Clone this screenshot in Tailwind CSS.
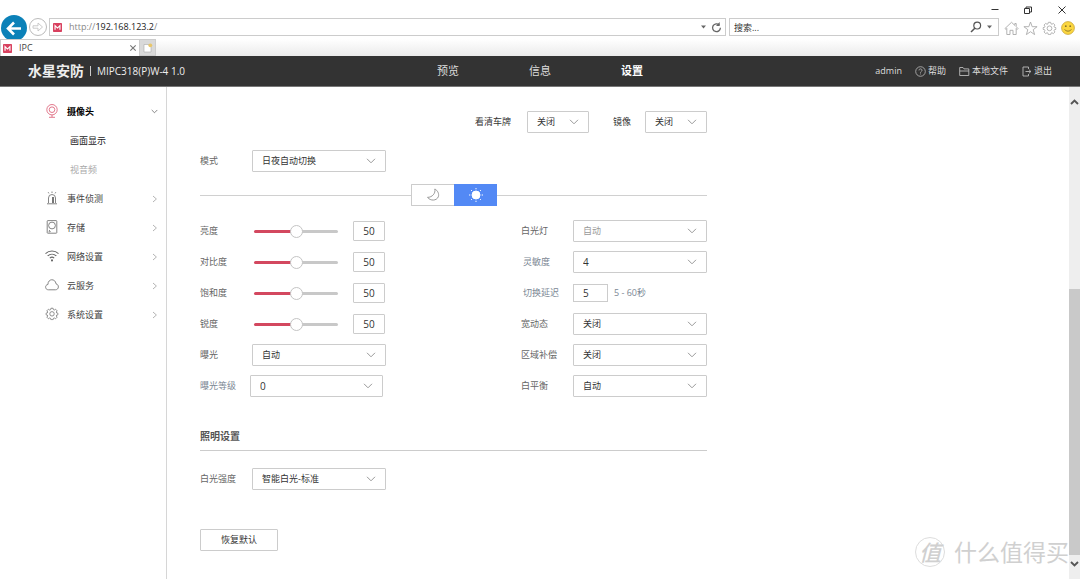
<!DOCTYPE html>
<html lang="zh-CN">
<head>
<meta charset="utf-8">
<title>IPC</title>
<script src="https://cdn.jsdelivr.net/npm/@tailwindcss/browser@4"></script>
</head>
<body class="relative flex min-h-screen flex-col overflow-x-hidden bg-white font-['Open_Sans','Noto_Sans_CJK_SC',sans-serif] text-[9px] leading-3 text-[#444]">

<svg class="hidden">
  <symbol id="down" viewBox="0 0 10 6"><path d="M1 .8l4 4 4-4" fill="none" stroke="currentColor" stroke-width="1"/></symbol>
  <symbol id="right" viewBox="0 0 6 8"><path d="M1 1l3.400 3L1 7" fill="none" stroke="currentColor" stroke-width=".9"/></symbol>
  <symbol id="fav" viewBox="0 0 10 10"><rect width="10" height="10" rx=".8" fill="#d8415f"/><path d="M2.300 7.400V2.900L5 5.600l2.700-2.700v4.500" fill="none" stroke="#fff" stroke-width="1.300"/></symbol>
  <symbol id="gear" viewBox="0 0 16 16"><g fill="none" stroke="currentColor"><path d="M6.700 1.500h2.600l.4 1.700 1.100.5 1.500-1 1.900 1.900-1 1.500.5 1.100 1.700.4v1.800l-1.700.4-.5 1.100 1 1.500-1.900 1.900-1.500-1-1.100.5-.4 1.700H6.700l-.4-1.700-1.100-.5-1.500 1-1.900-1.900 1-1.500-.5-1.100L.6 9.400V7.600l1.700-.4.5-1.100-1-1.500 1.900-1.900 1.500 1 1.100-.5z"/><circle cx="8" cy="8.300" r="2.700"/></g></symbol>
</svg>

<!-- Window controls -->
<div class="flex h-[15px] items-end justify-end gap-[23px] pr-3">
  <button aria-label="最小化" class="flex w-[10px] justify-center"><svg class="h-[10px] w-[10px]" viewBox="0 0 10 10"><path d="M1.500 4.500h7" stroke="#333"/></svg></button>
  <button aria-label="还原" class="flex w-[10px] justify-center"><svg class="h-[10px] w-[10px]" viewBox="0 0 10 10"><path d="M1.500 3.500h5v5h-5zM3 3.500v-1.500h5.500v5H6.500" fill="none" stroke="#333"/></svg></button>
  <button aria-label="关闭窗口" class="flex w-[12px] justify-center"><svg class="h-[10px] w-[10px]" viewBox="0 0 10 10"><path d="M1.500 1.500l7 7m0-7l-7 7" stroke="#333"/></svg></button>
</div>

<!-- Address bar -->
<div class="flex h-6 items-center pr-[5px]">
  <button aria-label="后退" class="ml-px"><svg class="h-6 w-[26px]" viewBox="0 0 26 24"><circle cx="13" cy="13" r="13" fill="#0b81b8"/><path d="M20 13.500H7.500M13 7.500l-6 6 6 6" fill="none" stroke="#fff" stroke-width="2.600"/></svg></button>
  <button aria-label="前进" class="ml-px"><svg class="h-[20px] w-[20px]" viewBox="0 0 20 20"><circle cx="10" cy="10" r="8.500" fill="#fff" stroke="#bbb"/><path d="M5 8.800h5V6l4.500 4-4.500 4v-2.800H5z" fill="none" stroke="#c4c4c4" stroke-width=".9"/></svg></button>
  <div class="ml-px flex h-[18px] min-w-0 flex-1 items-center border border-[#ccc] bg-white pl-[3px] pr-[3px]">
    <svg class="h-[9px] w-[9px]"><use href="#fav"/></svg>
    <span class="ml-[7px] flex-1 whitespace-nowrap leading-4 text-[#888]">http://<span class="text-[#222]">192.168.123.2</span>/</span>
    <svg class="h-1 w-[5px]" viewBox="0 0 5 4"><path d="M0 .5h5L2.500 3.500z" fill="#666"/></svg>
    <button aria-label="刷新" class="ml-[5px]"><svg class="h-[11px] w-[11px]" viewBox="0 0 11 11"><path d="M8.300 3A3.900 3.900 0 1 0 9.400 5.800" fill="none" stroke="#666" stroke-width="1.300"/><path d="M8.700 0v4H5z" fill="#666"/></svg></button>
  </div>
  <div class="ml-[3px] flex h-[18px] w-[270px] items-center border border-[#ccc] bg-white pl-1 pr-[6px]">
    <input type="text" aria-label="搜索" placeholder="搜索..." class="h-4 min-w-0 flex-1 bg-transparent outline-none placeholder:text-[#333]">
    <svg class="h-3 w-3" viewBox="0 0 12 12"><circle cx="7.200" cy="4.600" r="3.400" fill="none" stroke="#555" stroke-width="1.200"/><path d="M4.800 7.200L1 11" stroke="#555" stroke-width="1.500"/></svg>
    <svg class="ml-[5px] h-1 w-[5px]" viewBox="0 0 5 4"><path d="M0 .5h5L2.500 3.500z" fill="#666"/></svg>
  </div>
  <div class="ml-[5px] flex items-center gap-[4px] pt-[2px] text-[#aaa]">
    <button aria-label="主页"><svg class="h-[15px] w-[15px]" viewBox="0 0 15 15"><path d="M1 7.500L7.500 1.300 10.800 4.400V2.500h1.400v3.200L14 7.500l-.8.900-1-1v6.100H9V9.300H6v4.200H2.800V7.400l-1 1z" fill="none" stroke="currentColor" stroke-width=".9"/></svg></button>
    <button aria-label="收藏夹"><svg class="h-[15px] w-[15px]" viewBox="0 0 15 15"><path d="M7.500 1l1.700 4.700h4.900l-3.900 3 1.400 4.900-4.100-2.900-4.100 2.900 1.400-4.900-3.900-3h4.900z" fill="none" stroke="currentColor" stroke-width=".9"/></svg></button>
    <button aria-label="工具"><svg class="h-[15px] w-[15px]" viewBox="0 0 16 17"><use href="#gear" width="16" height="16"/></svg></button>
    <button aria-label="反馈"><svg class="h-[14px] w-[14px]" viewBox="0 0 14 14"><circle cx="7" cy="7" r="6.400" fill="#fbd63f" stroke="#c9a63a" stroke-width=".8"/><circle cx="4.800" cy="5.200" r=".9" fill="#86702a"/><circle cx="9.200" cy="5.200" r=".9" fill="#86702a"/><path d="M3.600 8.400c1.500 2.300 5.300 2.300 6.800 0" fill="none" stroke="#86702a" stroke-width=".9"/></svg></button>
  </div>
</div>

<!-- Browser tabs -->
<div class="flex h-[17px] bg-linear-to-b from-white to-[#ebebeb]">
  <div class="flex w-[140px] items-center border border-b-0 border-[#ccc] bg-white pl-[2px] pr-[2px]">
    <svg class="h-[9px] w-[9px]"><use href="#fav"/></svg>
    <span class="ml-[7px] flex-1">IPC</span>
    <button aria-label="关闭标签页"><svg class="h-2 w-2" viewBox="0 0 8 8"><path d="M1.300 1.300l5.400 5.400m0-5.400L1.300 6.700" stroke="#777" stroke-width="1.100"/></svg></button>
  </div>
  <button aria-label="新建标签页" class="flex w-4 items-center justify-center border border-l-0 border-[#ccc] bg-[#d9d9d9]"><svg class="h-[10px] w-[10px]" viewBox="0 0 10 10"><path d="M1 1.500h5l2 2v5.500H1z" fill="#fff" stroke="#aaa" stroke-width=".6"/><circle cx="7.300" cy="2.300" r="1.900" fill="#e8c66a"/></svg></button>
</div>

<!-- Site header -->
<header class="grid h-[31px] grid-cols-[1fr_auto_1fr] items-center border-b border-[#777] bg-[#333] px-7 text-[#ddd]">
  <div class="flex items-center whitespace-nowrap">
    <span class="text-[14px] font-bold leading-4 text-[#eee]">水星安防</span>
    <span class="ml-[6px] h-[10px] w-px bg-[#ccc]"></span>
    <span class="ml-[6px] text-[10px] text-[#eee]">MIPC318(P)W-4 1.0</span>
  </div>
  <nav class="flex gap-[70px] text-[11px] leading-4">
    <a href="#">预览</a><a href="#">信息</a><a href="#" class="font-bold text-white" aria-current="page">设置</a>
  </nav>
  <div class="flex items-center justify-end whitespace-nowrap">
    <span>admin</span>
    <a href="#" class="ml-[13px] flex items-center gap-[2px]"><svg class="h-[11px] w-[11px]" viewBox="0 0 11 11" fill="none" stroke="#bbb" stroke-width=".8"><circle cx="5.500" cy="5.500" r="4.800"/><path d="M4 4.400c0-2 3-2 3 0 0 1-1.500 1.100-1.500 2.300m0 .8v.9"/></svg>帮助</a>
    <a href="#" class="ml-[13px] flex items-center gap-[2px]"><svg class="h-[11px] w-[11px]" viewBox="0 0 11 11" fill="none" stroke="#bbb" stroke-width=".9"><path d="M.7 9.500V1.500h3.300l1 1.400h4.800v6.600zM.7 5h9.100"/></svg>本地文件</a>
    <a href="#" class="ml-[13px] flex items-center gap-[2px]"><svg class="h-[11px] w-[11px]" viewBox="0 0 11 11" fill="none" stroke="#bbb" stroke-width=".9"><path d="M7.500 3V1H2v9h5.500V8M4.500 5.500h5.300M7.900 3.600l2 1.900-2 1.900"/></svg>退出</a>
  </div>
</header>

<div class="flex flex-1">
  <!-- Sidebar -->
  <aside class="w-[167px] shrink-0 border-r border-[#d6d6d6] pt-[10px]">
    <nav class="flex flex-col">
      <a href="#" class="flex h-[29px] items-center pl-[45px] pr-2 font-bold text-black">
        <svg class="mb-[2px] mr-2 h-[14px] w-[14px]" viewBox="0 0 14 14" fill="none" stroke="#df6a80" stroke-width=".9"><circle cx="7" cy="5.700" r="5.200"/><circle cx="7" cy="5.700" r="2.800"/><path d="M7 11v2M4 13.300h6"/></svg>
        <span class="flex-1">摄像头</span><svg class="h-[5px] w-[7px] text-[#555]"><use href="#down"/></svg>
      </a>
      <a href="#" class="flex h-[29px] items-center pl-[70px] text-[#222]">画面显示</a>
      <a href="#" class="flex h-[29px] items-center pl-[70px] text-[#aaa]">视音频</a>
      <a href="#" class="flex h-[29px] items-center pl-[45px] pr-2">
        <svg class="mb-[2px] mr-2 h-[14px] w-[14px]" viewBox="0 0 14 14" fill="none" stroke="#777" stroke-width=".9"><path d="M3.500 12V7a3.500 3.500 0 0 1 7 0v5M2 12.800h10M7 .5v1.500M3.200 1.200l.7 1.200M10.800 1.200l-.7 1.200"/><path d="M8 6v6" stroke="#555" stroke-width="1.600"/></svg>
        <span class="flex-1">事件侦测</span><svg class="h-2 w-[6px] text-[#aaa]"><use href="#right"/></svg>
      </a>
      <a href="#" class="flex h-[29px] items-center pl-[45px] pr-2">
        <svg class="mb-[2px] mr-2 h-[14px] w-[14px]" viewBox="0 0 14 14" fill="none" stroke="#777" stroke-width=".9"><rect x="2.200" y=".6" width="9.600" height="12.600" rx=".6"/><circle cx="7" cy="5.500" r="3.400"/><path d="M4 10l1.500 1.700M3.600 11.800h1.500"/></svg>
        <span class="flex-1">存储</span><svg class="h-2 w-[6px] text-[#aaa]"><use href="#right"/></svg>
      </a>
      <a href="#" class="flex h-[29px] items-center pl-[45px] pr-2">
        <svg class="mb-[2px] mr-2 h-[14px] w-[14px]" viewBox="0 0 14 14" fill="none" stroke="#666" stroke-width="1.100"><path d="M.5 4.600c3.700-3.500 9.300-3.500 13 0M2.700 6.900c2.500-2.300 6.100-2.300 8.600 0M4.800 9.100c1.300-1.100 3.100-1.100 4.400 0"/><circle cx="7" cy="11.400" r=".5"/></svg>
        <span class="flex-1">网络设置</span><svg class="h-2 w-[6px] text-[#aaa]"><use href="#right"/></svg>
      </a>
      <a href="#" class="flex h-[29px] items-center pl-[45px] pr-2">
        <svg class="mb-[2px] mr-2 h-[14px] w-[14px]" viewBox="0 0 14 14" fill="none" stroke="#777" stroke-width=".9"><path d="M3.500 11.800C-.3 11.800-.2 6.700 2.900 6.500 3 .3 10.400.3 11 5.800c3.400.8 3.100 6-.6 6z"/></svg>
        <span class="flex-1">云服务</span><svg class="h-2 w-[6px] text-[#aaa]"><use href="#right"/></svg>
      </a>
      <a href="#" class="flex h-[29px] items-center pl-[45px] pr-2">
        <svg class="mb-[2px] mr-2 h-[14px] w-[14px] text-[#777]" viewBox="0 0 16 17"><use href="#gear" width="16" height="16"/></svg>
        <span class="flex-1">系统设置</span><svg class="h-2 w-[6px] text-[#aaa]"><use href="#right"/></svg>
      </a>
    </nav>
  </aside>

  <!-- Settings form -->
  <main class="min-w-0 flex-1 px-[33px] pt-6">
    <form class="max-w-[507px] text-[#666]">
      <div class="flex items-center justify-end text-[#333]">
        <label for="plate" class="mr-4">看清车牌</label>
        <div class="relative w-[62px]"><select id="plate" class="h-[22px] w-full appearance-none rounded-[1px] border border-[#ccc] bg-white pl-[9px] text-[#333]"><option>关闭</option></select><svg class="pointer-events-none absolute right-[10px] top-2 h-[6px] w-[10px] text-[#999]"><use href="#down"/></svg></div>
        <label for="mirror" class="ml-6 mr-[14px]">镜像</label>
        <div class="relative w-[62px]"><select id="mirror" class="h-[22px] w-full appearance-none rounded-[1px] border border-[#ccc] bg-white pl-[9px] text-[#333]"><option>关闭</option></select><svg class="pointer-events-none absolute right-[10px] top-2 h-[6px] w-[10px] text-[#999]"><use href="#down"/></svg></div>
      </div>

      <div class="mt-[17px] flex items-center">
        <label for="mode" class="w-[52px]">模式</label>
        <div class="relative w-[134px]"><select id="mode" class="h-[22px] w-full appearance-none rounded-[1px] border border-[#ccc] bg-white pl-[9px] text-[#333]"><option>日夜自动切换</option></select><svg class="pointer-events-none absolute right-[10px] top-2 h-[6px] w-[10px] text-[#999]"><use href="#down"/></svg></div>
      </div>

      <div class="mt-3 flex items-center">
        <span class="h-px flex-1 bg-[#d0d0d0]"></span>
        <button type="button" aria-label="夜间" class="flex h-[22px] w-[43px] items-center justify-center rounded-l-[1px] border border-r-0 border-[#ccc] bg-white"><svg class="h-[14px] w-[14px]" viewBox="0 0 14 14"><path d="M8.800 1c1 4.300-2.500 8.300-7.300 8.400 3 3.700 9 3.600 10.800-.6C13.400 5.900 11.600 2.300 8.800 1z" fill="none" stroke="#999"/></svg></button>
        <button type="button" aria-label="白天" aria-pressed="true" class="flex h-[22px] w-[43px] items-center justify-center bg-[#5389f5]"><svg class="h-[14px] w-[14px]" viewBox="0 0 14 14" stroke="#fff"><circle cx="7" cy="7" r="4" fill="#fff"/><path d="M7 0v1.300M7 12.700V14M0 7h1.300M12.700 7H14M2.100 2.100l.9.900M11 11l.9.900M2.100 11.900L3 11M11 3l.9-.9"/></svg></button>
        <span class="h-px flex-[0_0_210px] bg-[#d0d0d0]"></span>
      </div>

      <div class="mt-[14px] flex justify-between">
        <div class="flex flex-col gap-[9px]">
          <div class="flex h-[22px] items-center"><label for="s1" class="w-[54px]">亮度</label><input id="s1" type="range" value="50" class="h-[13px] w-[84px] appearance-none bg-transparent [&::-webkit-slider-runnable-track]:h-[3px] [&::-webkit-slider-runnable-track]:rounded-full [&::-webkit-slider-runnable-track]:bg-linear-to-r [&::-webkit-slider-runnable-track]:from-[#d3485f] [&::-webkit-slider-runnable-track]:from-50% [&::-webkit-slider-runnable-track]:to-[#c8c8c8] [&::-webkit-slider-runnable-track]:to-50% [&::-webkit-slider-thumb]:-mt-[5px] [&::-webkit-slider-thumb]:h-[13px] [&::-webkit-slider-thumb]:w-[13px] [&::-webkit-slider-thumb]:appearance-none [&::-webkit-slider-thumb]:rounded-full [&::-webkit-slider-thumb]:border [&::-webkit-slider-thumb]:border-[#c4c4c4] [&::-webkit-slider-thumb]:bg-white"><input type="text" aria-label="亮度值" value="50" class="ml-[15px] h-5 w-8 rounded-[1px] border border-[#ccc] text-center text-[10px] text-[#333]"></div>
          <div class="flex h-[22px] items-center"><label for="s2" class="w-[54px]">对比度</label><input id="s2" type="range" value="50" class="h-[13px] w-[84px] appearance-none bg-transparent [&::-webkit-slider-runnable-track]:h-[3px] [&::-webkit-slider-runnable-track]:rounded-full [&::-webkit-slider-runnable-track]:bg-linear-to-r [&::-webkit-slider-runnable-track]:from-[#d3485f] [&::-webkit-slider-runnable-track]:from-50% [&::-webkit-slider-runnable-track]:to-[#c8c8c8] [&::-webkit-slider-runnable-track]:to-50% [&::-webkit-slider-thumb]:-mt-[5px] [&::-webkit-slider-thumb]:h-[13px] [&::-webkit-slider-thumb]:w-[13px] [&::-webkit-slider-thumb]:appearance-none [&::-webkit-slider-thumb]:rounded-full [&::-webkit-slider-thumb]:border [&::-webkit-slider-thumb]:border-[#c4c4c4] [&::-webkit-slider-thumb]:bg-white"><input type="text" aria-label="对比度值" value="50" class="ml-[15px] h-5 w-8 rounded-[1px] border border-[#ccc] text-center text-[10px] text-[#333]"></div>
          <div class="flex h-[22px] items-center"><label for="s3" class="w-[54px]">饱和度</label><input id="s3" type="range" value="50" class="h-[13px] w-[84px] appearance-none bg-transparent [&::-webkit-slider-runnable-track]:h-[3px] [&::-webkit-slider-runnable-track]:rounded-full [&::-webkit-slider-runnable-track]:bg-linear-to-r [&::-webkit-slider-runnable-track]:from-[#d3485f] [&::-webkit-slider-runnable-track]:from-50% [&::-webkit-slider-runnable-track]:to-[#c8c8c8] [&::-webkit-slider-runnable-track]:to-50% [&::-webkit-slider-thumb]:-mt-[5px] [&::-webkit-slider-thumb]:h-[13px] [&::-webkit-slider-thumb]:w-[13px] [&::-webkit-slider-thumb]:appearance-none [&::-webkit-slider-thumb]:rounded-full [&::-webkit-slider-thumb]:border [&::-webkit-slider-thumb]:border-[#c4c4c4] [&::-webkit-slider-thumb]:bg-white"><input type="text" aria-label="饱和度值" value="50" class="ml-[15px] h-5 w-8 rounded-[1px] border border-[#ccc] text-center text-[10px] text-[#333]"></div>
          <div class="flex h-[22px] items-center"><label for="s4" class="w-[54px]">锐度</label><input id="s4" type="range" value="50" class="h-[13px] w-[84px] appearance-none bg-transparent [&::-webkit-slider-runnable-track]:h-[3px] [&::-webkit-slider-runnable-track]:rounded-full [&::-webkit-slider-runnable-track]:bg-linear-to-r [&::-webkit-slider-runnable-track]:from-[#d3485f] [&::-webkit-slider-runnable-track]:from-50% [&::-webkit-slider-runnable-track]:to-[#c8c8c8] [&::-webkit-slider-runnable-track]:to-50% [&::-webkit-slider-thumb]:-mt-[5px] [&::-webkit-slider-thumb]:h-[13px] [&::-webkit-slider-thumb]:w-[13px] [&::-webkit-slider-thumb]:appearance-none [&::-webkit-slider-thumb]:rounded-full [&::-webkit-slider-thumb]:border [&::-webkit-slider-thumb]:border-[#c4c4c4] [&::-webkit-slider-thumb]:bg-white"><input type="text" aria-label="锐度值" value="50" class="ml-[15px] h-5 w-8 rounded-[1px] border border-[#ccc] text-center text-[10px] text-[#333]"></div>
          <div class="flex items-center"><label for="exp" class="w-[52px]">曝光</label><div class="relative w-[134px]"><select id="exp" class="h-[22px] w-full appearance-none rounded-[1px] border border-[#ccc] bg-white pl-[9px] text-[#333]"><option>自动</option></select><svg class="pointer-events-none absolute right-[10px] top-2 h-[6px] w-[10px] text-[#999]"><use href="#down"/></svg></div></div>
          <div class="flex items-center"><label for="lvl" class="w-[50px] text-[#7b8794]">曝光等级</label><div class="relative w-[133px]"><select id="lvl" class="h-[22px] w-full appearance-none rounded-[1px] border border-[#ccc] bg-white pl-[9px] text-[10px] text-[#333]"><option>0</option></select><svg class="pointer-events-none absolute right-[10px] top-2 h-[6px] w-[10px] text-[#999]"><use href="#down"/></svg></div></div>
        </div>
        <div class="flex flex-col gap-[9px]">
          <div class="flex items-center"><label for="lamp" class="w-[52px]">白光灯</label><div class="relative w-[134px]"><select id="lamp" disabled class="h-[22px] w-full appearance-none rounded-[1px] border border-[#ccc] bg-white pl-[9px] text-[#999] opacity-100"><option>自动</option></select><svg class="pointer-events-none absolute right-[10px] top-2 h-[6px] w-[10px] text-[#999]"><use href="#down"/></svg></div></div>
          <div class="flex items-center"><label for="sens" class="w-[52px] pl-[2px] text-[#7b8794]">灵敏度</label><div class="relative w-[134px]"><select id="sens" class="h-[22px] w-full appearance-none rounded-[1px] border border-[#ccc] bg-white pl-[9px] text-[10px] text-[#333]"><option>4</option></select><svg class="pointer-events-none absolute right-[10px] top-2 h-[6px] w-[10px] text-[#999]"><use href="#down"/></svg></div></div>
          <div class="flex h-[22px] items-center text-[#7b8794]"><label for="delay" class="w-[52px] pl-[2px]">切换延迟</label><input id="delay" type="text" value="5" class="h-[18px] w-[35px] border border-[#ccc] pl-[9px] text-[10px] text-[#333]"><span class="ml-[6px]">5 - 60秒</span></div>
          <div class="flex items-center"><label for="wdr" class="w-[52px]">宽动态</label><div class="relative w-[134px]"><select id="wdr" class="h-[22px] w-full appearance-none rounded-[1px] border border-[#ccc] bg-white pl-[9px] text-[#333]"><option>关闭</option></select><svg class="pointer-events-none absolute right-[10px] top-2 h-[6px] w-[10px] text-[#999]"><use href="#down"/></svg></div></div>
          <div class="flex items-center"><label for="area" class="w-[52px]">区域补偿</label><div class="relative w-[134px]"><select id="area" class="h-[22px] w-full appearance-none rounded-[1px] border border-[#ccc] bg-white pl-[9px] text-[#333]"><option>关闭</option></select><svg class="pointer-events-none absolute right-[10px] top-2 h-[6px] w-[10px] text-[#999]"><use href="#down"/></svg></div></div>
          <div class="flex items-center"><label for="wb" class="w-[52px]">白平衡</label><div class="relative w-[134px]"><select id="wb" class="h-[22px] w-full appearance-none rounded-[1px] border border-[#ccc] bg-white pl-[9px] text-[#333]"><option>自动</option></select><svg class="pointer-events-none absolute right-[10px] top-2 h-[6px] w-[10px] text-[#999]"><use href="#down"/></svg></div></div>
        </div>
      </div>

      <h2 class="mt-[31px] border-b border-[#ccc] pb-[6px] text-[10px] font-bold leading-4 text-[#555]">照明设置</h2>
      <div class="mt-[17px] flex items-center">
        <label for="power" class="w-[52px]">白光强度</label>
        <div class="relative w-[134px]"><select id="power" class="h-[22px] w-full appearance-none rounded-[1px] border border-[#ccc] bg-white pl-[9px] text-[#333]"><option>智能白光-标准</option></select><svg class="pointer-events-none absolute right-[10px] top-2 h-[6px] w-[10px] text-[#999]"><use href="#down"/></svg></div>
      </div>
      <button type="button" class="mt-[39px] h-[22px] w-[78px] rounded-[1px] border border-[#ccc] text-[#333]">恢复默认</button>
    </form>
  </main>

  <!-- Scrollbar -->
  <div class="flex w-[11px] shrink-0 flex-col items-center bg-[#eee] text-[#555]">
    <svg class="mt-3 h-[6px] w-[9px] shrink-0" viewBox="0 0 9 6"><path d="M1 5l3.500-3.500L8 5" fill="none" stroke="currentColor" stroke-width="1.900"/></svg>
    <span class="flex-1"></span>
    <span class="h-[54%] w-full bg-[#c9c9c9]"></span>
    <svg class="mb-3 mt-[6px] h-[6px] w-[9px] shrink-0" viewBox="0 0 9 6"><path d="M1 1l3.500 3.500L8 1" fill="none" stroke="currentColor" stroke-width="1.900"/></svg>
  </div>
</div>

<!-- Watermark -->
<div class="pointer-events-none absolute bottom-[11px] right-[11px] flex items-center gap-[9px] whitespace-nowrap text-[#d0d0d0]">
  <span class="flex h-[30px] w-[30px] items-center justify-center rounded-full border border-[#ddd] text-[22px] font-medium italic leading-7">值</span>
  <span class="text-[23px] leading-8">什么值得买</span>
</div>
</body>
</html>
